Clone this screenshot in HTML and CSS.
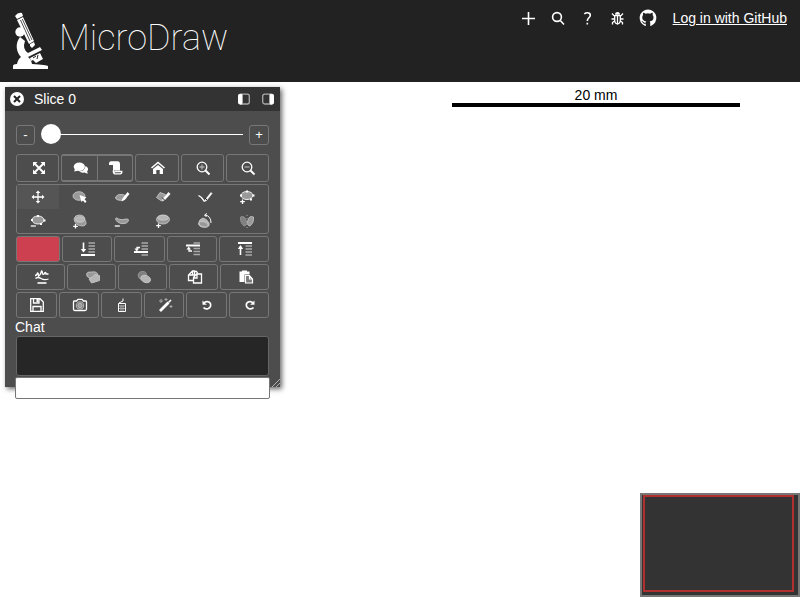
FILE: index.html
```html
<!DOCTYPE html>
<html lang="en">
<head>
<meta charset="utf-8">
<title>MicroDraw</title>
<link rel="stylesheet" href="styles.css">
</head>
<body>
<header class="top">
  <a class="brand">
    <svg class="scope" viewBox="0 0 36 58"><path d="M2 4Q5 0 9 1L10 4L4 7ZM4 8L10 5L21 29L16 32Z"/><path d="M7.500 8L17 29M9.300 7L19 28" stroke="#222" stroke-width=".8"/><circle cx="7" cy="20" r="4.700"/><path d="M17 32L21 30L22 33L19 36L17 34Z"/><path d="M7 25C2 31 3 40 8 45Q5 47 4 52Q0 52 0 54V57H35V54Q34 53 19 52Q18 47 15 45L29 38L27 35L15 41Q9 37 12 29Z"/><path d="M17 46L27 41L30 47L23 51L20 48L18 49Z"/><path d="M20 46L23 44M25 43L24 47" stroke="#222"/></svg>
    <span class="name">MicroDraw</span>
  </a>
  <nav class="links">
    <svg class="ic" viewBox="0 0 20 20"><path class="s w15" d="M9.500 4V17M3 10.500H16"/></svg>
    <svg class="ic" viewBox="0 0 20 20"><circle class="s w15" cx="8" cy="9" r="4.400"/><path class="s w15" d="M11.300 12.500L15 16.500"/></svg>
    <svg class="ic" viewBox="0 0 20 20"><path class="s w15" d="M5.300 6Q6.500 4.800 8.300 4.800Q11.300 4.800 11.300 7.300C11.300 9.800 8.300 9.800 8.300 13M8.300 14.700V16.600"/></svg>
    <svg class="ic" viewBox="0 0 20 20"><path d="M6 6.800Q6 4 8.500 4T11 6.800Z"/><path class="s" d="M3 5.500L5 7.700H12L14 5.500M2.500 11H5.500M11.500 11H14.500M3.500 16.500V14.500L5.500 13M13.500 16.500V14.500L11.500 13M5.700 8V13Q6 15.500 8.500 16Q11 15.500 11.300 13V8M8.500 8V16"/></svg>
    <svg class="ic gh" viewBox="0 0 16 16"><path d="M8 1.300a6.700 6.700 0 0 0-2.300 13c.4.100.5-.1.500-.4v-1.400c-1.900.4-2.300-.8-2.300-.8-.3-.8-.8-1-.8-1-.6-.4 0-.4 0-.4.700 0 1.100.7 1.100.7.600 1 1.600.7 2 .5 0-.4.200-.7.400-.9-1.600-.2-3.200-.7-3.200-3.200 0-.7.300-1.300.7-1.800-.1-.2-.3-.9.100-1.800 0 0 .6-.2 1.900.7a6 6 0 0 1 3.600 0c1.300-.9 1.900-.7 1.900-.7.400.9.200 1.600.1 1.800.4.500.7 1.100.7 1.800 0 2.600-1.500 3.100-3.100 3.200.3.300.5.700.5 1.300v2c0 .3.200.5.500.4A6.700 6.700 0 0 0 8 1.300Z"/></svg>
    <a class="login">Log in with GitHub</a>
  </nav>
</header>

<div class="scale"><span>20 mm</span></div>

<section class="panel">
  <div class="bar">
    <svg class="close" viewBox="0 0 14 14"><circle cx="7" cy="7" r="7"/><path d="M4 4L10 10M10 4L4 10" stroke="#222" stroke-width="2"/></svg>
    <span class="slice">Slice 0</span>
    <svg class="dock" viewBox="0 0 12 12"><rect class="s g" x=".7" y="1.200" width="10.600" height="9.800" rx="2"/><path d="M4.500 1V11" class="s g thin"/><path d="M2 1H4V11.500H2Q0 11 0 9.500V3Q0 1 2 1Z"/></svg>
    <svg class="dock" viewBox="0 0 12 12"><rect class="s g" x=".7" y="1.200" width="10.600" height="9.800" rx="2"/><path d="M7.500 1V11" class="s g thin"/><path d="M8 1H10Q12 1 12 3V9.500Q12 11 10 11.500H8Z"/></svg>
  </div>
  <div class="body">
    <div class="slider">
      <div class="btn step">-</div>
      <div class="track"><i class="knob"></i></div>
      <div class="btn step plus">+</div>
    </div>

    <div class="row r1">
      <div class="btn"><svg class="ic" viewBox="0 0 20 20"><path d="M4 4H8.500L4 8.500ZM16 4V8.500L11.500 4ZM4 16V11.500L8.500 16ZM16 16H11.500L16 11.500Z"/><path class="s w2" d="M5.500 5.500L14.500 14.500M14.500 5.500L5.500 14.500"/></svg></div>
      <div class="btn pair">
        <div class="half"><svg class="ic bubbles" viewBox="0 0 20 20"><path d="M14.500 8Q17.500 9.500 17 12Q16.500 13 16 13.500L17 15.500Q15 15.500 13.500 14.500Q10 15 8 13.500Q14 13 14.500 8Z"/><ellipse cx="8.300" cy="8.700" rx="5.600" ry="4.200"/><path d="M4 10.500L3.200 13.500Q6 13.200 7 12Z"/></svg></div>
        <div class="half"><svg class="ic" viewBox="0 0 20 20"><path d="M3 6Q3 3.200 5 3.200H12Q14 3.500 14 6V12.500H7.500V15H7V7H3Z"/><path class="s" d="M8.500 13.500H15.800Q16 15.800 14 15.800H8.500Q7.200 15 7.200 12.500"/><path d="M7 12L9 14L8 16Q7 15 7 12Z"/></svg></div>
      </div>
      <div class="btn"><svg class="ic" viewBox="0 0 20 20"><path class="s w15" d="M3.500 10L10 4.500L16.500 10"/><path d="M10 7L15 11V16H11.700V12H8.300V16H5V11Z"/></svg></div>
      <div class="btn"><svg class="ic still" viewBox="0 0 20 20"><circle class="s" cx="9" cy="9" r="4.800"/><path class="s g" d="M9 6.500V11.500M6.500 9H11.500"/><path class="s w2" d="M12.500 12.500L16.500 16.500"/></svg></div>
      <div class="btn"><svg class="ic still" viewBox="0 0 20 20"><circle class="s" cx="9" cy="9" r="4.800"/><path class="s g" d="M6.500 9H11.500"/><path class="s w2" d="M12.500 12.500L16.500 16.500"/></svg></div>
    </div>

    <div class="tools">
      <div class="tool on"><svg class="ic" viewBox="0 0 20 20"><path class="s" d="M10 5V15M5 10H15"/><path d="M10 3.500L12.300 6H7.700ZM10 16.500L7.700 14H12.300ZM3.500 10L6 7.700V12.300ZM16.500 10L14 12.300V7.700Z"/></svg></div>
      <div class="tool"><svg class="ic" viewBox="0 0 20 20"><ellipse class="blob" cx="9" cy="9" rx="6" ry="4.300"/><path d="M9.500 8L16.500 10.500L14.500 12L16.500 14.500L15 16L13 13.500L11.500 15Z"/></svg></div>
      <div class="tool"><svg class="ic" viewBox="0 0 20 20"><path class="blob" d="M3.500 10Q6 6.500 10 7.500Q15 8 14 11.500Q10 14.500 6 13Q3 12 3.500 10Z"/><path d="M9.500 14.500L10.500 11.500L15.500 5L17.500 7L12.500 13Z"/></svg></div>
      <div class="tool"><svg class="ic" viewBox="0 0 20 20"><path class="blob" d="M3.500 10.500L7 5.500L12.500 7.500L8.500 14Z"/><path d="M9 14.500L10 11.500L15.500 5L17.500 7L12 13Z"/><path d="M9 10.500L12 13.500" stroke="#222"/></svg></div>
      <div class="tool"><svg class="ic" viewBox="0 0 20 20"><path class="s" d="M3.500 8.500L6.500 10.500L9.500 14.500"/><path d="M9.500 14.500L10.500 12.500L16 5.500L17 6.500L11.500 13.500Z" stroke="#fff" stroke-width=".6"/><path d="M10 11L12 13" stroke="#222"/></svg></div>
      <div class="tool"><svg class="ic" viewBox="0 0 20 20"><ellipse class="blob edge" cx="10" cy="8.500" rx="6" ry="4"/><path d="M3 7.500h2v2H3ZM9 3.500h2v2H9ZM15.500 7.500h2v2h-2ZM13 11.500h2v2h-2Z"/><path class="s" d="M5.500 12.500V17M3.200 14.700H7.800"/></svg></div>
      <div class="tool"><svg class="ic" viewBox="0 0 20 20"><ellipse class="blob edge" cx="10" cy="9" rx="6" ry="4"/><path d="M3 8h2v2H3ZM9 4h2v2H9ZM15.500 8.500h2v2h-2ZM12 12h2v2h-2Z"/><path class="s" d="M2.800 15H7.800"/></svg></div>
      <div class="tool"><svg class="ic" viewBox="0 0 20 20"><path class="blob" d="M4 8Q5 4 9 4Q15 4 15 9Q18 14 13 15Q5 15 4 8Z"/><ellipse class="blob lite" cx="10" cy="8.500" rx="4.500" ry="2.700"/><path class="s" d="M5.500 13V17.500M3.200 15.300H7.800"/></svg></div>
      <div class="tool"><svg class="ic" viewBox="0 0 20 20"><path class="blob" d="M3.500 7.500Q4.500 6 6.500 8Q10 9.500 14 8Q17 7.500 16.500 10Q15 13 10 12.700Q4 11.500 3.500 7.500Z"/><path class="s" d="M2.800 15H7.800"/></svg></div>
      <div class="tool"><svg class="ic" viewBox="0 0 20 20"><ellipse class="blob" cx="10" cy="8.500" rx="6.500" ry="4.500"/><ellipse class="blob lite" cx="10" cy="6.700" rx="5.500" ry="2.400"/><path class="s" d="M5.500 12.500V17M3.200 14.700H7.800"/></svg></div>
      <div class="tool"><svg class="ic" viewBox="0 0 20 20"><path class="blob lite" d="M3.500 13Q4 8 8 7Q12 8 14 12Q15 16 11 16Q5 17 3.500 13Z"/><ellipse class="blob" cx="8.500" cy="13.300" rx="4.800" ry="2.600" transform="rotate(15 8.500 13.300)"/><path class="s thin" d="M10 4Q16 5 16 12M12 2.500L9.500 4L11.500 6"/></svg></div>
      <div class="tool"><svg class="ic" viewBox="0 0 20 20"><path class="blob dim" d="M3.500 6Q8 4 9.300 10Q10 15 7 15Q3 12 3.500 6Z"/><path class="blob" d="M16.500 6Q12 4 10.700 10Q10 15 13 15Q17 12 16.500 6Z"/><path class="s g thin" d="M10 4V17" stroke-dasharray="1 2"/></svg></div>
    </div>

    <div class="row r3">
      <div class="btn swatch"></div>
      <div class="btn"><svg class="ic" viewBox="0 0 20 20"><path class="s w2" d="M3 16H17"/><path class="s w15" d="M5.500 3.500V11"/><path d="M2.800 10H8.200L5.500 13.500Z"/><path class="s g w15" d="M10.500 4H17M10.500 7H17M10.500 10H17M10.500 13H17"/></svg></div>
      <div class="btn"><svg class="ic" viewBox="0 0 20 20"><path class="s w2" d="M3 13H17"/><path class="s" d="M6 11V8.500H9"/><path d="M3.500 9.500H8L5.700 12.500Z"/><path class="s g w15" d="M10.500 4H17M10.500 7H17M10.500 10H17M10.500 16H17"/></svg></div>
      <div class="btn"><svg class="ic" viewBox="0 0 20 20"><path class="s w2" d="M3 6.500H17"/><path class="s" d="M6 9V12H9"/><path d="M3.500 10.500H8L5.700 7.500Z"/><path class="s g w15" d="M10.500 4H17M10.500 9.500H17M10.500 12.500H17M10.500 15.500H17"/></svg></div>
      <div class="btn"><svg class="ic" viewBox="0 0 20 20"><path class="s w2" d="M3 4H17"/><path class="s w15" d="M5.500 8V16"/><path d="M2.800 10H8.200L5.500 6Z"/><path class="s g w15" d="M10.500 7H17M10.500 10H17M10.500 13H17M10.500 16H17"/></svg></div>
    </div>

    <div class="row r4">
      <div class="btn"><svg class="ic" viewBox="0 0 20 20"><path class="s" d="M3 8.500Q5 8.500 5.500 6Q6.500 6 6.500 9Q8 9 9.500 4Q10.500 4 10.500 7Q12 8 13 5.500Q14 5 14 7H16.500M3.500 11.500Q6 9.500 9 11.500T16.500 12"/><path class="s w15" d="M5.500 16H14.500"/></svg></div>
      <div class="btn"><svg class="ic" viewBox="0 0 20 20"><path class="blob" d="M3.500 7Q4 4.500 8 5Q13 4 14.500 6.500L14 10Q10 12 6.500 11Q3.500 10 3.500 7Z"/><path class="blob lite" d="M6 12Q10 10 12 7.500L16.500 8.500L16.500 13.500Q12 15 8.500 16Z"/></svg></div>
      <div class="btn"><svg class="ic" viewBox="0 0 20 20"><path class="blob dim" d="M4 8Q5 4 9 4.500Q12 4 12.500 8L7 12.500Q4 11 4 8Z"/><ellipse class="blob lite" cx="11.700" cy="12" rx="5" ry="3.500" transform="rotate(20 11.700 12)"/></svg></div>
      <div class="btn"><svg class="ic" viewBox="0 0 20 20"><path class="s" d="M8 13.500H3.500V8L7.500 4H9.500V8H3.500M7.500 4V8M9.500 4.500H11.500L13 7M8.500 10.500L11.500 7H16.500V16H8.500ZM8.500 11H12V7"/></svg></div>
      <div class="btn"><svg class="ic" viewBox="0 0 20 20"><path d="M3.500 4.500H6V3.500H11V4.500H13.500V7.500H8.500V15H3.500Z"/><path class="sheet" d="M9.500 8.500H13.500L16.500 12V16H9.500ZM13.500 8.500V12H16.500"/></svg></div>
    </div>

    <div class="row r5">
      <div class="btn"><svg class="ic" viewBox="0 0 20 20"><path class="s" d="M3.700 3.700H13L16.300 7V16.300H3.700ZM6.500 4V8H12V4M6 16V11.500H14V16"/><path d="M9.500 4H11.500V7H9.500Z"/></svg></div>
      <div class="btn"><svg class="ic" viewBox="0 0 20 20"><path class="s" d="M4 6H6.500L8 4.300H12L13.500 6H16Q16.500 6 16.500 7V14Q16.500 15.500 15 15.500H5Q3.500 15.500 3.500 14V7Q3.500 6 4 6Z"/><circle class="s g" cx="10" cy="10.500" r="3.600"/><circle class="blob" cx="10" cy="10.500" r="2.200"/></svg></div>
      <div class="btn"><svg class="ic" viewBox="0 0 20 20"><path class="s thin" d="M7 8L11 6V3.500M6.500 8.500H13.500V16.500H6.500Z"/><path class="s g thin" d="M7 11H13M7 13.500H13M9 10V16M11 10V16"/></svg></div>
      <div class="btn"><svg class="ic" viewBox="0 0 20 20"><path d="M4 15L12.500 6.500L14.500 8.500L6 17Z"/><path class="s w15" d="M13.500 7.500L16 5"/><path class="s g thin" d="M6 4V8M4 6H8M11 3V6M9.500 4.500H12.500M16 10V13M14.500 11.500H17.500"/></svg></div>
      <div class="btn"><svg class="ic" viewBox="0 0 20 20"><path class="s w15" d="M7 8C9 5.500 13.700 6.500 13.700 10C13.700 14 8.500 15 6.500 12.500"/><path d="M5.500 5.500V9.800H9.800Z"/></svg></div>
      <div class="btn"><svg class="ic" viewBox="0 0 20 20"><path class="s w15" d="M13 8C11 5.500 6.300 6.500 6.300 10C6.300 14 11.500 15 13.500 12.500"/><path d="M14.500 5.500V9.800H10.200Z"/></svg></div>
    </div>

    <div class="chat">Chat</div>
    <div class="log"></div>
    <input class="msg" type="text">
  </div>
  <svg class="grip" viewBox="0 0 8 8"><path d="M0 8L8 0M4 8L8 4"/></svg>
</section>

<div class="map"><div class="view"></div></div>
</body>
</html>
```

FILE: styles.css
```css
* { box-sizing: border-box; }
body {
  margin: 0;
  width: 800px;
  height: 600px;
  overflow: hidden;
  position: relative;
  background: #fff;
  color: #fff;
  font: 14px/16px "Liberation Sans", Arial, sans-serif;
}
svg { display: block; fill: #fff; flex: none; }
.ic { width: 20px; height: 20px; }
.s { stroke: #fff; stroke-width: 1.3; fill: none; }
.w15 { stroke-width: 1.6; }
.w2 { stroke-width: 2; }
.thin { stroke-width: 1; }
.g { stroke: #aaa; }
.blob { fill: #999; stroke: #ccc; stroke-width: .8; }
.edge { stroke: #eee; stroke-width: 1; }
.lite { fill: #b5b5b5; }
.dim { fill: #808080; stroke: #999; }
.sheet { fill: #777; stroke: #fff; stroke-width: 1.2; }

.top {
  height: 82px;
  background: #222;
  display: flex;
  justify-content: space-between;
  align-items: flex-start;
  padding: 8px 13px 0 13px;
}
.brand { display: flex; align-items: flex-start; }
.scope { width: 36px; height: 58px; margin-top: 4px; }
.name {
  font: 100 36px/42px Roboto, sans-serif;
  margin: 9px 0 0 10px;
  white-space: nowrap;
}
.links { display: flex; align-items: center; gap: 10px; height: 20px; }
.gh { margin-left: -1px; margin-right: 1px; }
.login { text-decoration: underline; margin-left: 4px; white-space: nowrap; }

.scale {
  position: absolute;
  left: 452px;
  top: 87px;
  width: 288px;
  height: 20px;
  border-bottom: 4px solid #000;
  color: #000;
  text-align: center;
}

.panel {
  position: absolute;
  left: 5px;
  top: 87px;
  width: 275px;
  height: 300px;
  background: #4d4d4d;
  box-shadow: 2px 2px 5px rgba(0, 0, 0, .6);
}
.bar {
  height: 24px;
  background: #333;
  display: flex;
  align-items: center;
  padding: 0 6px 0 5px;
}
.close { width: 14px; height: 14px; }
.slice { margin-left: 10px; flex: 1; }
.dock { width: 12px; height: 12px; }
.dock + .dock { margin-left: 12px; }
.body { padding: 14px 10px 0 11px; }

.btn {
  border: 1px solid #777;
  border-radius: 3px;
  display: flex;
  align-items: center;
  justify-content: center;
}
.btn .ic { margin-left: 1px; margin-right: -1px; }
.btn .still { margin: 0; }
.btn .bubbles { margin-left: 3px; margin-right: -1px; }
.slider {
  display: flex;
  align-items: flex-start;
  width: 253px;
  height: 20px;
  margin-bottom: 9px;
}
.step { width: 19px; height: 20px; font-size: 13px; }
.plus { width: 20px; }
.track {
  flex: 1;
  height: 1px;
  background: #fff;
  margin: 9px 6px 0 16px;
  position: relative;
}
.knob {
  position: absolute;
  left: -10px;
  top: -10px;
  width: 20px;
  height: 20px;
  border-radius: 50%;
  background: #fff;
}
.row { display: grid; gap: 2px; margin-bottom: 2px; width: 253px; height: 26px; }
.r1 { height: 28px; grid-template-columns: 43px 72px 44px 43px 43px; }
.r3 { grid-template-columns: 44px 50px 51px 50px 50px; }
.r4 { grid-template-columns: repeat(5, 1fr); }
.r5 { grid-template-columns: repeat(6, 1fr); margin-bottom: 1px; }
.pair { border-width: 2px 1px; }
.half { flex: 1; display: flex; justify-content: center; align-items: center; height: 24px; }
.half + .half { border-left: 1px solid #777; }
.tools {
  width: 253px;
  height: 50px;
  border: 1px solid #777;
  border-radius: 3px;
  display: grid;
  grid-template-columns: repeat(6, 1fr);
  grid-template-rows: 24px 24px;
  margin-bottom: 2px;
}
.tool { display: flex; align-items: center; justify-content: center; }
.on { background: #555; }
.swatch { background: #cc4050; }
.chat { margin-left: -1px; height: 17px; line-height: 16px; }
.log {
  width: 253px;
  height: 40px;
  background: #262626;
  border: 1px solid #666;
  border-radius: 3px;
}
.msg {
  display: block;
  width: 255px;
  height: 22px;
  margin: 1px 0 0 -1px;
  border: 1px solid #767676;
  border-radius: 2px;
  background: #fff;
  position: relative;
}
.grip {
  position: absolute;
  right: 0;
  bottom: 0;
  width: 8px;
  height: 8px;
  stroke: #ccc;
  stroke-width: .8;
}

.map {
  position: absolute;
  left: 640px;
  top: 493px;
  width: 160px;
  height: 104px;
  border: 2px solid #777;
  background: #333;
  padding-left: 1px;
}
.view { width: 151px; height: 97px; border: 2px solid #b03030; }
```
